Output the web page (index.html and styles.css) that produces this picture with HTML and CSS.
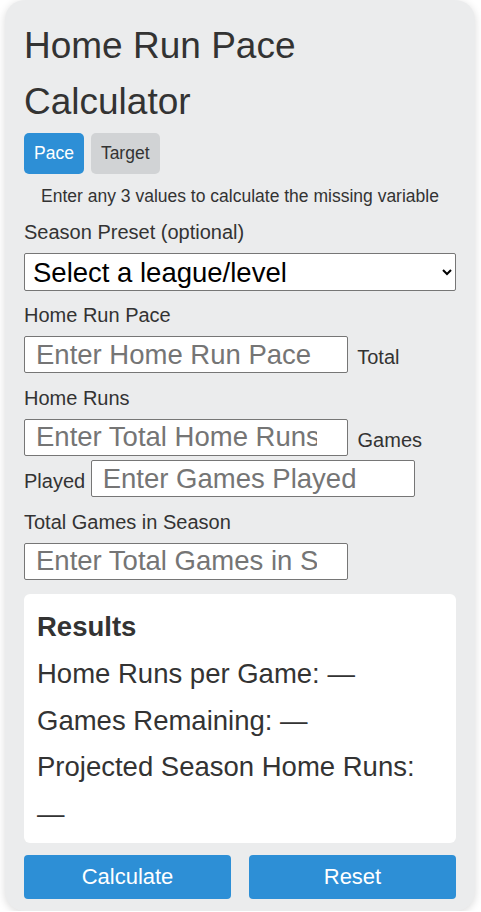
FILE: index.html
```html
<!DOCTYPE html>
<html lang="en">
<head>
    <meta charset="UTF-8">
    <meta name="viewport" content="width=device-width, initial-scale=1.0">
    <title>Home Run Pace Calculator</title>
    <link rel="stylesheet" href="styles.css">
</head>
<body>
    <div class="calculator">
        <h1>Home Run Pace Calculator</h1>

        <div class="tabs">
            <button class="tab active">Pace</button>
            <button class="tab">Target</button>
        </div>

        <p class="hint">Enter any 3 values to calculate the missing variable</p>

        <label class="presetLabel" for="preset">Season Preset (optional)</label>
        <select id="preset" class="preset">
            <option>Select a league/level</option>
            <option>MLB (162 games)</option>
            <option>NPB (143 games)</option>
            <option>KBO (144 games)</option>
        </select>

        <div class="fields">
            <label for="pace">Home Run Pace</label>
            <input type="text" id="pace" placeholder="Enter Home Run Pace">
            <label for="total">Total Home Runs</label>
            <input type="text" id="total" placeholder="Enter Total Home Runs">
            <label for="played">Games Played</label>
            <input type="text" id="played" placeholder="Enter Games Played">
            <label for="season">Total Games in Season</label>
            <input type="text" id="season" placeholder="Enter Total Games in Season">
        </div>

        <div class="results">
            <h3>Results</h3>
            <p>Home Runs per Game: <span id="perGame">—</span></p>
            <p>Games Remaining: <span id="remaining">—</span></p>
            <p>Projected Season Home Runs: <span id="projected">—</span></p>
        </div>

        <div class="actions">
            <button class="btn">Calculate</button>
            <button class="btn">Reset</button>
        </div>
    </div>
</body>
</html>
```

FILE: styles.css
```css
body {
    font-family: "Liberation Sans", Arial, sans-serif;
    margin: 0;
    padding: 0;
    background-color: #fff;
    color: #333;
}
.calculator {
    width: 470px;
    box-sizing: border-box;
    margin: 0 6px 0 5px;
    padding: 18px 19px 12px;
    background-color: #ebeced;
    border-radius: 20px;
    box-shadow: 0 2px 8px rgba(0,0,0,0.15);
}
h1 {
    font-size: 37px;
    font-weight: normal;
    line-height: 55.5px;
    margin: 0;
}
.tabs {
    display: flex;
    gap: 7px;
    margin-top: 4px;
}
.tab {
    font-family: inherit;
    font-size: 17.5px;
    height: 41px;
    padding: 0 10px;
    border: none;
    border-radius: 5px;
    background-color: #d1d3d5;
    color: #333;
    cursor: pointer;
}
.tab.active {
    background-color: #2d8fd6;
    color: #fff;
}
.hint {
    font-size: 17.5px;
    line-height: 24px;
    text-align: center;
    margin: 10px 0 4px;
}
.presetLabel {
    display: block;
    font-size: 20px;
    line-height: 41px;
}
.preset {
    display: block;
    width: 100%;
    height: 38px;
    font-family: inherit;
    font-size: 27.5px;
    color: #000;
    background-color: #fff;
    border: 1px solid #767676;
    border-radius: 2px;
    padding: 0 4px;
    margin: 0 0 4px;
}
.fields {
    font-size: 20px;
    line-height: 41px;
}
.fields input {
    width: 324px;
    height: 37px;
    box-sizing: border-box;
    font-family: inherit;
    font-size: 27.5px;
    padding: 0 30px 0 11px;
    margin: 0 4px 0 0;
    border: 1px solid #767676;
    border-radius: 2px;
    background-color: #fff;
    color: #333;
}
.fields input::placeholder {
    color: #757575;
}
.results {
    background-color: #fff;
    border-radius: 6px;
    padding: 10px 13px 5px;
    margin-top: 10px;
}
.results h3 {
    font-size: 27.5px;
    line-height: 46.75px;
    margin: 0;
}
.results p {
    font-size: 27.5px;
    line-height: 46.75px;
    margin: 0;
}
.actions {
    display: flex;
    gap: 18px;
    margin-top: 12px;
}
.btn {
    flex: 1;
    height: 44px;
    font-family: inherit;
    font-size: 22px;
    color: #fff;
    background-color: #2d8fd6;
    border: none;
    border-radius: 4px;
    cursor: pointer;
}
```
